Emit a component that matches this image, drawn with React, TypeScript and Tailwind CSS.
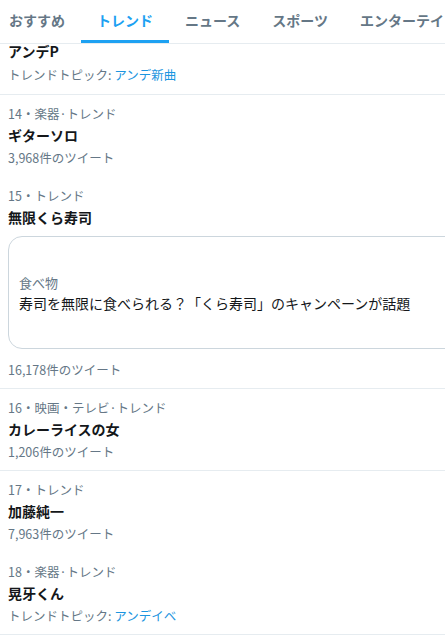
import React from "react";

const font = { fontFamily: '"Noto Sans CJK JP", "Noto Sans", sans-serif' };

function Tabs() {
  const tabs = ["おすすめ", "トレンド", "ニュース", "スポーツ", "エンターテインメント"];
  return (
    <div className="flex h-[44px] border-b border-[#e6ecf0] overflow-hidden whitespace-nowrap">
      <div className="flex -ml-[7px]">
        {tabs.map((t, i) => (
          <div
            key={t}
            className={`relative flex items-center pb-[2px] px-4 text-[14px] font-bold ${
              i === 1 ? "text-[#1da1f2]" : "text-[#657786]"
            }`}
          >
            {t}
            {i === 1 && <div className="absolute left-0 right-0 bottom-0 h-[3px] bg-[#1da1f2]" />}
          </div>
        ))}
      </div>
    </div>
  );
}

function Meta({ children }: { children: React.ReactNode }) {
  return <div className="text-[12.5px] leading-[18px] text-[#657786]">{children}</div>;
}
function Title({ children }: { children: React.ReactNode }) {
  return <div className="text-[14px] leading-[24px] font-bold text-[#14171a]">{children}</div>;
}
function Count({ children }: { children: React.ReactNode }) {
  return <div className="text-[12.5px] leading-[22px] text-[#657786]">{children}</div>;
}
function Topic({ children }: { children: React.ReactNode }) {
  return (
    <div className="text-[12.5px] leading-[22px] text-[#657786]">
      トレンドトピック: <span className="text-[#1b95e0]">{children}</span>
    </div>
  );
}

function Item({
  meta,
  title,
  count,
  border = true,
  topic,
}: {
  meta: string;
  title: string;
  count?: string;
  border?: boolean;
  topic?: string;
}) {
  return (
    <div className={`pl-2 pt-[10px] ${border ? "pb-[7px] border-b border-[#e6ecf0]" : "pb-[8px]"}`}>
      <Meta>{meta}</Meta>
      <Title>{title}</Title>
      {count && <Count>{count}</Count>}
      {topic && <Topic>{topic}</Topic>}
    </div>
  );
}

export default function App() {
  return (
    <div className="w-[445px] h-[641px] bg-white overflow-hidden" style={font}>
      <Tabs />
      <div className="pl-2 pb-[8px] border-b border-[#e6ecf0]">
        <div className="text-[14px] leading-[14px] font-bold text-[#14171a]">アンデP</div>
        <div className="mt-[6px]">
          <Topic>アンデ新曲</Topic>
        </div>
      </div>
      <Item meta="14・楽器·トレンド" title="ギターソロ" count="3,968件のツイート" border={false} />
      <div className="pl-2 pt-[10px] pb-[7px] border-b border-[#e6ecf0]">
        <Meta>15・トレンド</Meta>
        <Title>無限くら寿司</Title>
        <div className="mt-[7px] w-[460px] h-[113px] rounded-[14px] border border-[#ccd6dd] flex flex-col justify-center pl-[10px]">
          <div className="text-[13px] leading-[20px] text-[#657786]">食べ物</div>
          <div className="text-[14px] leading-[20px] text-[#14171a] whitespace-nowrap">
            寿司を無限に食べられる？「くら寿司」のキャンペーンが話題
          </div>
        </div>
        <div className="mt-[10px]">
          <Count>16,178件のツイート</Count>
        </div>
      </div>
      <Item meta="16・映画・テレビ·トレンド" title="カレーライスの女" count="1,206件のツイート" />
      <Item meta="17・トレンド" title="加藤純一" count="7,963件のツイート" border={false} />
      <Item meta="18・楽器·トレンド" title="晃牙くん" topic="アンデイベ" />
    </div>
  );
}
